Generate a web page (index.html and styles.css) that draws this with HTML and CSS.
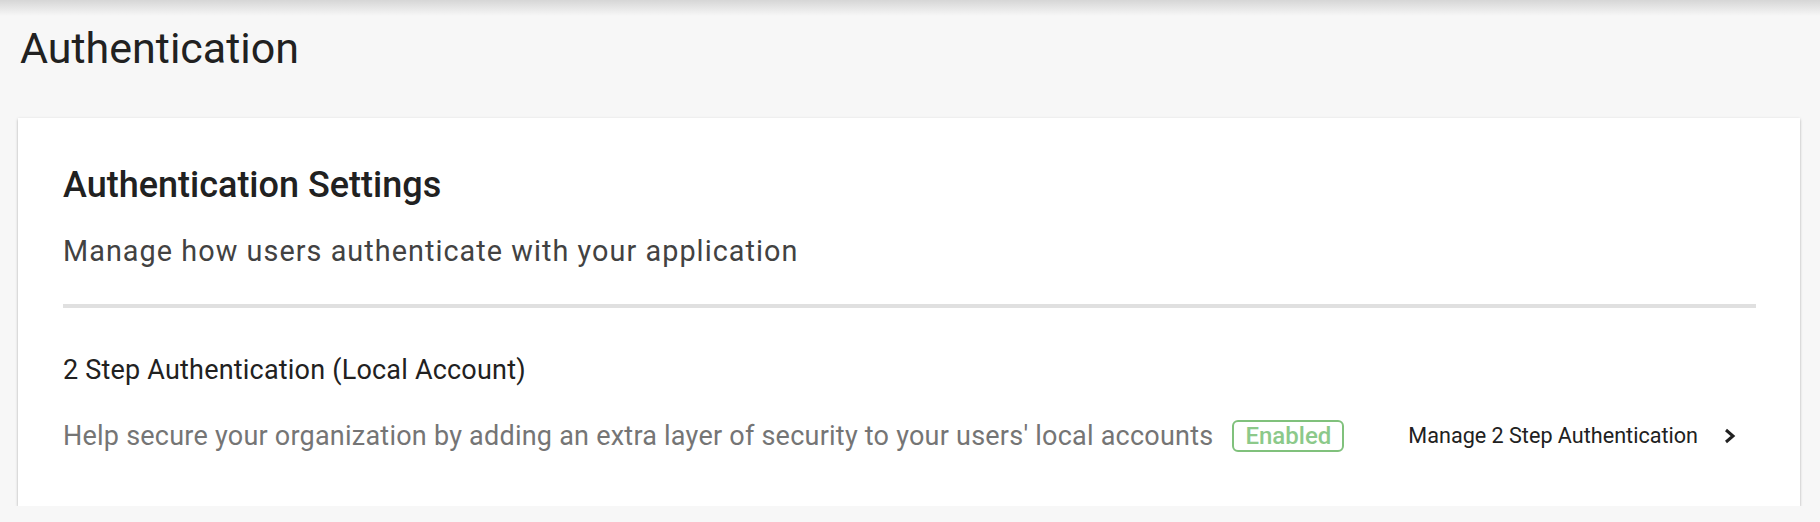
FILE: index.html
```html
<!DOCTYPE html>
<html lang="en">
  <head>
    <meta charset="UTF-8" />
    <meta name="viewport" content="width=device-width, initial-scale=1.0" />
    <title>Authentication</title>
    <link rel="stylesheet" href="styles.css">
  </head>
  <body>
    <div class="app-bar-shadow"></div>

    <h1 class="page-title">Authentication</h1>

    <div class="card">
      <h2 class="card-title">Authentication Settings</h2>
      <p class="card-subtitle">Manage how users authenticate with your application</p>

      <hr class="divider" />

      <div class="setting">
        <div class="setting-title">2 Step Authentication (Local Account)</div>
        <div class="setting-row">
          <span class="setting-desc">Help secure your organization by adding an extra layer of security to your users' local accounts</span>
          <span class="badge">Enabled</span>
          <a class="manage-link" href="#">
            Manage 2 Step Authentication
            <svg class="chevron" width="12" height="16" viewBox="0 0 12 16">
              <polyline points="2,2 9,8 2,14" fill="none" stroke="#212121" stroke-width="3" />
            </svg>
          </a>
        </div>
      </div>
    </div>
  </body>
</html>
```

FILE: styles.css
```css
body {
  margin: 0;
  background: #f7f7f7;
  font-family: Roboto, "Liberation Sans", sans-serif;
  color: #212121;
}
.app-bar-shadow {
  height: 16px;
  background: linear-gradient(#d6d6d6, #f7f7f7);
}
.page-title {
  font-size: 43px;
  font-weight: 400;
  line-height: 50px;
  margin: 7px 0 45px 20px;
}
.card {
  background: #fff;
  margin: 0 20px 0 18px;
  padding: 47px 44px 53px 45px;
  box-shadow: 0 1px 3px rgba(0, 0, 0, 0.2), 0 2px 2px rgba(0, 0, 0, 0.12);
}
.card-title {
  font-size: 36px;
  font-weight: 500;
  line-height: 40px;
  margin: 0;
}
.card-subtitle {
  font-size: 28.8px;
  line-height: 34px;
  letter-spacing: 1.05px;
  color: #424242;
  margin: 29px 0 0;
}
.divider {
  border: none;
  height: 4px;
  background: #e0e0e0;
  margin: 36px 0 0;
}
.setting-title {
  font-size: 27px;
  line-height: 34px;
  letter-spacing: 0.2px;
  margin-top: 45px;
}
.setting-row {
  display: flex;
  align-items: center;
  margin-top: 32px;
  white-space: nowrap;
}
.setting-desc {
  font-size: 27px;
  line-height: 34px;
  letter-spacing: 0.23px;
  color: #757575;
}
.badge {
  margin-left: 19px;
  height: 32px;
  box-sizing: border-box;
  padding: 0 11px;
  border: 2px solid #80c17c;
  border-radius: 6px;
  color: #8cc98a;
  font-size: 24px;
  font-weight: 500;
  line-height: 28px;
}
.manage-link {
  margin-left: auto;
  padding-right: 20px;
  display: flex;
  align-items: center;
  color: #212121;
  text-decoration: none;
  font-size: 21.6px;
  line-height: 26px;
}
.chevron {
  margin-left: 26px;
}
```
